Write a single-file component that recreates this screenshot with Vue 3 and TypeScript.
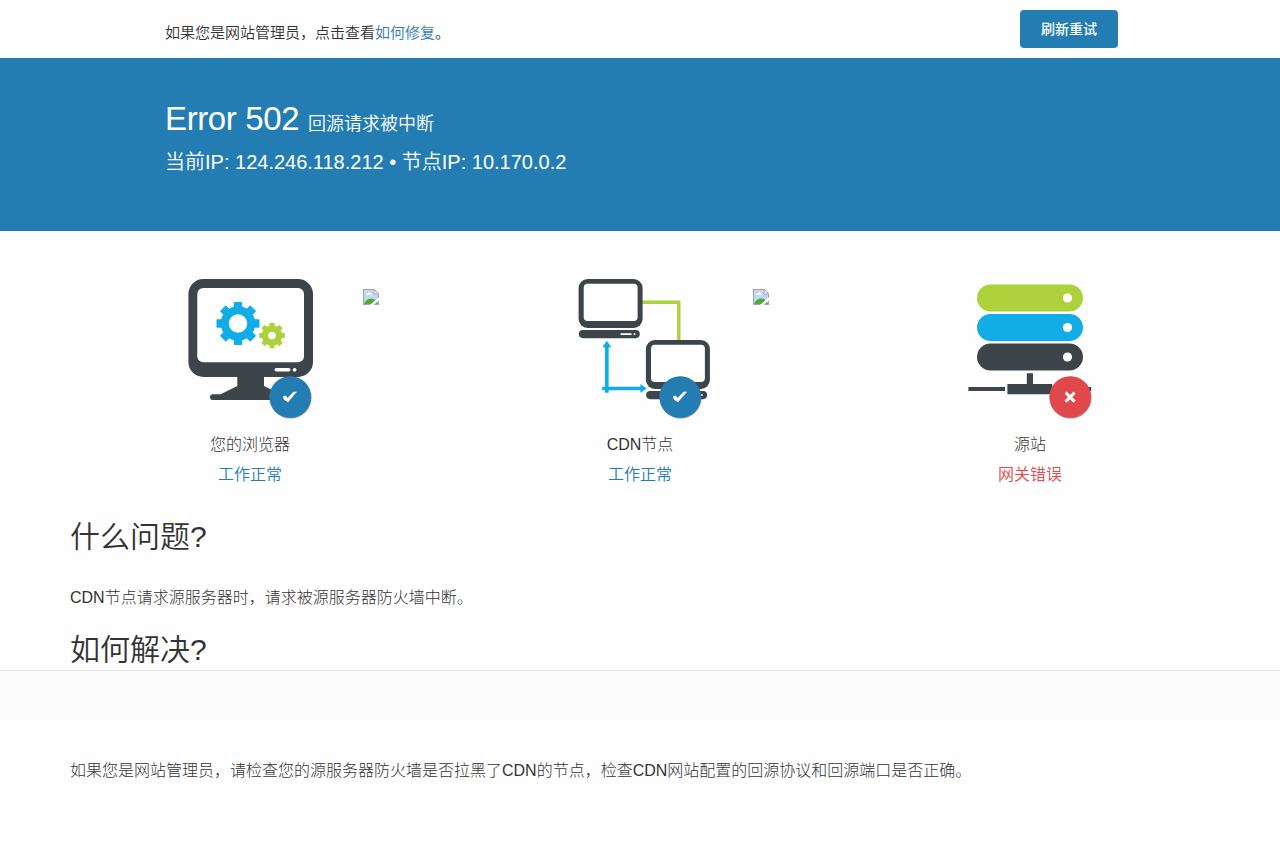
<script setup lang="ts">
interface Stage {
  kind: 'browser' | 'cdn' | 'origin'
  name: string
  state: string
  ok: boolean
  link: boolean
}

const stages: Stage[] = [
  { kind: 'browser', name: '您的浏览器', state: '工作正常', ok: true, link: true },
  { kind: 'cdn', name: 'CDN节点', state: '工作正常', ok: true, link: true },
  { kind: 'origin', name: '源站', state: '网关错误', ok: false, link: false },
]

const teeth: number[] = [0, 45, 90, 135, 180, 225, 270, 315]
const disks = [
  { y: 14.5, color: '#add13a' },
  { y: 44, color: '#12ade6' },
  { y: 73.5, color: '#3c454a' },
]
</script>

<template>
  <div class="page">
    <header class="topbar">
      <p class="hint">如果您是网站管理员，点击查看<a class="fix">如何修复</a>。</p>
      <button class="retry" type="button">刷新重试</button>
    </header>

    <section class="hero">
      <h1>Error 502 <small>回源请求被中断</small></h1>
      <p class="ips">当前IP: 124.246.118.212 • 节点IP: 10.170.0.2</p>
    </section>

    <section class="stages">
      <div v-for="s in stages" :key="s.kind" class="stage">
        <svg class="art" width="140" height="160" viewBox="0 0 140 160">
          <g v-if="s.kind === 'browser'">
            <rect x="8.4" y="9" width="124.6" height="98" rx="15" fill="#3c454a" />
            <rect x="17.3" y="18" width="106.7" height="74.3" rx="6" fill="#fff" />
            <rect x="94.5" y="98" width="16" height="3.6" rx="1.8" fill="#fff" />
            <circle cx="114.6" cy="99.8" r="1.9" fill="#fff" />
            <path d="M57.3 106H84V116L101 124.2H110V130H32.8Q30 130 30 127.1T32.8 124.2H40.5L57.3 116Z" fill="#3c454a" />
            <g transform="translate(58 53.5)" fill="#12ade6">
              <rect v-for="a in teeth" :key="a" x="-4.2" y="-21.5" width="8.4" height="11" rx=".7" :transform="`rotate(${a})`" />
              <circle r="13.2" fill="none" stroke="#12ade6" stroke-width="8" />
            </g>
            <g transform="translate(92 65.5)" fill="#add13a">
              <rect v-for="a in teeth" :key="a" x="-2.5" y="-12.8" width="5" height="7" rx=".4" :transform="`rotate(${a})`" />
              <circle r="7" fill="none" stroke="#add13a" stroke-width="6.4" />
            </g>
          </g>

          <g v-else-if="s.kind === 'cdn'">
            <path d="M72 32.2H108.8V71" fill="none" stroke="#add13a" stroke-width="3.4" />
            <g fill="#3c454a">
              <g>
                <rect x="8.6" y="9" width="64" height="49" rx="9" />
                <rect x="13.7" y="13.8" width="53.9" height="37.3" rx="4" fill="#fff" />
                <rect x="8.8" y="60" width="61" height="8.2" rx="4.1" />
                <rect x="50.3" y="63.2" width="11.5" height="1.7" rx=".8" fill="#fff" />
                <circle cx="64.5" cy="64" r="1" fill="#fff" />
              </g>
              <g transform="translate(67.3 61)">
                <rect x="8.6" y="9" width="64" height="49" rx="9" />
                <rect x="13.7" y="13.8" width="53.9" height="37.3" rx="4" fill="#fff" />
                <rect x="8.8" y="60" width="61" height="8.2" rx="4.1" />
                <circle cx="64.5" cy="64" r="1" fill="#fff" />
              </g>
            </g>
            <path d="M36.8 76V122.8M32.2 118.5H71.5" stroke="#12ade6" stroke-width="3.7" />
            <path d="M36.8 70.8L41.3 77.2H32.3ZM76.8 118.5L70.4 123V114Z" fill="#12ade6" />
          </g>

          <g v-else>
            <g v-for="d in disks" :key="d.y">
              <rect x="17" :y="d.y" width="106" height="27" rx="13.5" :fill="d.color" />
              <circle cx="107.5" :cy="d.y + 13.5" r="4.6" fill="#fff" />
            </g>
            <path d="M66.8 103.2H73V114H92.3V124.2H47.4V114H66.8ZM8.4 117H45V121H8.4ZM95 117H131.2V121H95Z" fill="#3c454a" />
          </g>

          <circle class="shadow" cx="110.6" cy="127.6" r="21" />
          <circle cx="110.2" cy="127" r="20.8" :fill="s.ok ? '#247db2' : '#e1484b'" />
          <path v-if="s.ok" d="M103 126.4L105.8 125.4L107.6 127.9L113.5 121.8H117L108 132.2L103.8 129.6Z" fill="#fff" />
          <path v-else d="M105.6 122.6L114.6 131.6M114.6 122.6L105.6 131.6" class="mark" />
        </svg>
        <svg v-if="s.link" class="missing" width="16" height="16" viewBox="0 0 16 16">
          <path d="M0 0H11.5L16 4.5V16H0Z" fill="#a3a3a3" />
          <path d="M1 1H11L15 5V15H1Z" fill="#c4d5f5" />
          <path d="M3 6Q3 4.2 5 4.3Q6 2.4 7.4 4.2Q9 4.3 9 6Z" fill="#fff" />
          <path d="M1 15Q3 9.6 8 9.5Q13 9.6 15 15Z" fill="#4eaa38" />
          <path d="M11 1V5H15Z" fill="#fff" />
          <path d="M11 .5V5H15.5" fill="none" stroke="#a3a3a3" />
          <path d="M6.8 16L16 8.2V11.3L10.7 16Z" fill="#fff" />
        </svg>
        <p class="name">{{ s.name }}</p>
        <p class="state" :class="{ bad: !s.ok }">{{ s.state }}</p>
      </div>
    </section>

    <main>
      <div class="content">
        <h2>什么问题?</h2>
        <p>CDN节点请求源服务器时，请求被源服务器防火墙中断。</p>
        <h2 class="solve">如何解决?</h2>
      </div>
      <div class="band"></div>
      <div class="content answer">
        <p>如果您是网站管理员，请检查您的源服务器防火墙是否拉黑了CDN的节点，检查CDN网站配置的回源协议和回源端口是否正确。</p>
      </div>
    </main>
  </div>
</template>

<style>
body {
  margin: 0;
  background: #fefefe;
}
</style>

<style scoped>
.page {
  height: 844px;
  overflow: hidden;
  color: #333;
  font-family: "Liberation Sans", "Noto Sans CJK SC", sans-serif;
  font-size: 16px;
  font-weight: 300;
}
h1, h2, p {
  margin: 0;
  font-weight: 300;
  white-space: nowrap;
}
.topbar {
  box-sizing: border-box;
  display: flex;
  justify-content: space-between;
  height: 58px;
  padding: 10px 162px 0 165px;
}
.hint {
  font-size: 15px;
  font-weight: 350;
  line-height: 46px;
}
.fix {
  color: #337ab7;
}
.retry {
  width: 98px;
  height: 38px;
  padding: 0 0 2px;
  border: 0;
  border-radius: 4px;
  background: #247db2;
  color: #fff;
  font: 500 14px "Liberation Sans", "Noto Sans CJK SC", sans-serif;
}
.hero {
  box-sizing: border-box;
  height: 173px;
  padding: 40px 165px 0;
  background: #247db2;
  color: #fff;
}
h1 {
  height: 42px;
  font-size: 33px;
  line-height: 42px;
  letter-spacing: -.38px;
}
h1 small {
  font-size: 18px;
  font-weight: 350;
  letter-spacing: 0;
}
.ips {
  font-size: 20px;
  font-weight: 350;
  line-height: 44px;
}
.stages {
  display: grid;
  grid-template-columns: repeat(3, 390px);
  padding: 39px 0 0 55px;
  height: 234px;
}
.stage {
  position: relative;
  text-align: center;
}
.art {
  display: block;
  margin: 0 auto;
}
.missing {
  position: absolute;
  left: 308px;
  top: 19px;
}
.shadow {
  fill: #555;
  opacity: .6;
}
.mark {
  fill: none;
  stroke: #fff;
  stroke-width: 2.9;
}
.name, .state {
  line-height: 30px;
}
.state {
  color: #247db2;
  font-weight: 350;
}
.state.bad {
  color: #e1484b;
}
.content {
  padding: 0 70px;
}
.content h2 {
  font-size: 30px;
  font-weight: 350;
  line-height: 34px;
  padding-top: 16px;
}
.content p {
  padding-top: 29px;
  line-height: 30px;
}
.content h2.solve {
  padding: 20px 0 3px;
}
.content.answer p {
  padding-top: 36px;
}
.band {
  box-sizing: border-box;
  height: 50px;
  border-top: 1px solid #e7e7e7;
  background: #fcfcfc;
}
</style>
